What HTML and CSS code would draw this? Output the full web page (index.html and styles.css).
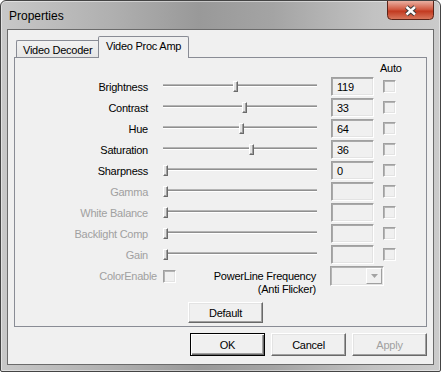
FILE: index.html
```html
<!DOCTYPE html>
<html lang="en">
<head>
    <meta charset="UTF-8">
    <title>Properties</title>
    <link rel="stylesheet" href="styles.css">
</head>
<body>
    <div class="window">
        <div class="titlebar">
            <span class="title">Properties</span>
            <div class="close">
                <svg width="47" height="19" viewBox="0 0 47 19">
                    <defs>
                        <linearGradient id="cg" x1="0" y1="0" x2="0" y2="1">
                            <stop offset="0" stop-color="#eab0a2"/>
                            <stop offset="0.45" stop-color="#d25a42"/>
                            <stop offset="0.55" stop-color="#c23a20"/>
                            <stop offset="1" stop-color="#d97a5f"/>
                        </linearGradient>
                    </defs>
                    <path d="M0.5 0 V14.5 Q0.5 18.5 4.5 18.5 H42.5 Q46.5 18.5 46.5 14.5 V0" fill="url(#cg)" stroke="#5a2419"/>
                    <path d="M19.5 6 L28 13.5 M28 6 L19.5 13.5" stroke="#3b3b3b" stroke-width="4.4"/>
                    <path d="M19.5 6 L28 13.5 M28 6 L19.5 13.5" stroke="#fff" stroke-width="2.4"/>
                </svg>
            </div>
        </div>
        <div class="client">
            <div class="tabs">
                <div class="tab">Video Decoder</div>
                <div class="tab active">Video Proc Amp</div>
            </div>
            <div class="panel">
                <div class="auto-head">Auto</div>

                <div class="row">
                    <span class="lbl">Brightness</span>
                    <div class="slider"><div class="track"></div><div class="thumb" style="left:70px"></div></div>
                    <div class="edit">119</div>
                    <div class="check"></div>
                </div>
                <div class="row">
                    <span class="lbl">Contrast</span>
                    <div class="slider"><div class="track"></div><div class="thumb" style="left:79px"></div></div>
                    <div class="edit">33</div>
                    <div class="check"></div>
                </div>
                <div class="row">
                    <span class="lbl">Hue</span>
                    <div class="slider"><div class="track"></div><div class="thumb" style="left:76px"></div></div>
                    <div class="edit">64</div>
                    <div class="check"></div>
                </div>
                <div class="row">
                    <span class="lbl">Saturation</span>
                    <div class="slider"><div class="track"></div><div class="thumb" style="left:86px"></div></div>
                    <div class="edit">36</div>
                    <div class="check"></div>
                </div>
                <div class="row">
                    <span class="lbl">Sharpness</span>
                    <div class="slider"><div class="track"></div><div class="thumb" style="left:0px"></div></div>
                    <div class="edit">0</div>
                    <div class="check"></div>
                </div>
                <div class="row disabled">
                    <span class="lbl">Gamma</span>
                    <div class="slider"><div class="track"></div><div class="thumb" style="left:0px"></div></div>
                    <div class="edit"></div>
                    <div class="check"></div>
                </div>
                <div class="row disabled">
                    <span class="lbl">White Balance</span>
                    <div class="slider"><div class="track"></div><div class="thumb" style="left:0px"></div></div>
                    <div class="edit"></div>
                    <div class="check"></div>
                </div>
                <div class="row disabled">
                    <span class="lbl">Backlight Comp</span>
                    <div class="slider"><div class="track"></div><div class="thumb" style="left:0px"></div></div>
                    <div class="edit"></div>
                    <div class="check"></div>
                </div>
                <div class="row disabled">
                    <span class="lbl">Gain</span>
                    <div class="slider"><div class="track"></div><div class="thumb" style="left:0px"></div></div>
                    <div class="edit"></div>
                    <div class="check"></div>
                </div>

                <div class="misc-row">
                    <span class="ce-lbl">ColorEnable</span>
                    <div class="check ce-check"></div>
                    <div class="plf">PowerLine Frequency<br>(Anti Flicker)</div>
                    <div class="combo">
                        <div class="combo-btn">
                            <svg width="7" height="4" viewBox="0 0 7 4"><path d="M0 0 H7 L3.5 4 Z" fill="#a3a3a3"/></svg>
                        </div>
                    </div>
                </div>

                <div class="default-row">
                    <button class="btn small">Default</button>
                </div>
            </div>
            <div class="buttons">
                <button class="btn primary">OK</button>
                <button class="btn">Cancel</button>
                <button class="btn off">Apply</button>
            </div>
        </div>
    </div>
</body>
</html>
```

FILE: styles.css
```css
body {
    margin: 0;
    padding: 0;
    font-family: "Liberation Sans", Arial, sans-serif;
    font-size: 11px;
    letter-spacing: -0.25px;
    color: #000;
    background: #fff;
}
.window {
    width: 441px;
    height: 372px;
    box-sizing: border-box;
    border: 1px solid #444;
    border-radius: 6px 6px 2px 2px;
    padding: 0 6px 6px 6px;
    display: flex;
    flex-direction: column;
    background: linear-gradient(to right, #c8c8c8 0%, #b0b0b0 25%, #999 45%, #a4a4a4 62%, #c2c2c2 85%, #cbcbcb 100%);
    box-shadow: inset 0 0 0 1px rgba(255, 255, 255, 0.45);
}
.titlebar {
    height: 28px;
    display: flex;
    align-items: flex-start;
    justify-content: space-between;
}
.title {
    font-size: 12px;
    letter-spacing: 0;
    line-height: 16px;
    margin: 7px 0 0 2px;
}
.close {
    height: 19px;
}
.close svg {
    display: block;
}
.client {
    flex: 1;
    background-color: #f0f0f0;
    border: 1px solid #6b6b6b;
    padding-top: 6px;
    display: flex;
    flex-direction: column;
}
.tabs {
    height: 22px;
    display: flex;
    align-items: flex-end;
    padding-left: 8px;
    position: relative;
    z-index: 1;
}
.tab {
    width: 82px;
    height: 17px;
    box-sizing: border-box;
    margin-bottom: 1px;
    padding: 3px 0 0 6px;
    border: 1px solid #898c95;
    border-bottom: none;
    border-right: none;
    border-radius: 2px 0 0 0;
    background: linear-gradient(#f2f2f2, #e6e6e6);
    white-space: nowrap;
}
.tab.active {
    width: 91px;
    height: 22px;
    margin-bottom: 0;
    padding: 3px 0 0 7px;
    border-right: 1px solid #898c95;
    border-radius: 2px 2px 0 0;
    background: #f0f0f0;
}
.panel {
    margin: -1px 6px 0 6px;
    border: 1px solid #898c95;
    background-color: #f0f0f0;
    padding: 4px 0 3px 0;
}
.auto-head {
    height: 13px;
    line-height: 13px;
    padding-left: 365px;
    margin-bottom: 2px;
}
.row {
    height: 19px;
    margin-bottom: 2px;
    display: flex;
    align-items: center;
}
.lbl {
    width: 133px;
    text-align: right;
    margin-right: 15px;
    white-space: nowrap;
}
.disabled .lbl {
    color: #a0a0a0;
}
.slider {
    width: 154px;
    height: 19px;
    margin-right: 14px;
    position: relative;
    display: flex;
    align-items: center;
}
.track {
    width: 100%;
    height: 1px;
    margin-top: -2px;
    background-color: #8f8f8f;
    border-top: 1px solid #b4b4b4;
    border-bottom: 1px solid #fff;
}
.thumb {
    position: absolute;
    top: 4px;
    width: 3px;
    height: 9px;
    background-color: #e4e4e4;
    border-top: 1px solid #fff;
    border-left: 1px solid #fff;
    border-right: 1px solid #6a6a6a;
    border-bottom: 1px solid #6a6a6a;
    box-shadow: inset -1px -1px #a0a0a0;
}
.edit {
    width: 43px;
    height: 19px;
    box-sizing: border-box;
    margin-right: 9px;
    padding: 2px 0 0 5px;
    line-height: 14px;
    background-color: #f0f0f0;
    border: 1px solid;
    border-color: #a0a0a0 #fff #fff #a0a0a0;
    box-shadow: inset 1px 1px #a8a8a8, inset -1px -1px #e3e3e3;
}
.check {
    width: 13px;
    height: 13px;
    box-sizing: border-box;
    background-color: #f0f0f0;
    border: 1px solid;
    border-color: #a0a0a0 #fff #fff #a0a0a0;
    box-shadow: inset 1px 1px #b4b4b4, inset -1px -1px #e3e3e3;
}
.misc-row {
    height: 36px;
    margin-top: 1px;
    display: flex;
    align-items: flex-start;
}
.ce-lbl {
    width: 142px;
    text-align: right;
    color: #a0a0a0;
    line-height: 13px;
    margin-top: 4px;
}
.ce-check {
    margin: 4px 0 0 6px;
}
.plf {
    flex: 1;
    text-align: right;
    line-height: 13px;
    margin: 4px 14px 0 0;
}
.combo {
    width: 54px;
    height: 20px;
    box-sizing: border-box;
    margin-right: 42px;
    border: 1px solid;
    border-color: #a0a0a0 #fff #fff #a0a0a0;
    box-shadow: inset 1px 1px #b4b4b4, inset -1px -1px #e3e3e3;
    display: flex;
    justify-content: flex-end;
    padding: 1px;
}
.combo-btn {
    width: 16px;
    height: 16px;
    box-sizing: border-box;
    border: 1px solid;
    border-color: #fff #a0a0a0 #a0a0a0 #fff;
    background-color: #f0f0f0;
    display: flex;
    align-items: center;
    justify-content: center;
}
.combo-btn svg {
    display: block;
}
.default-row {
    padding-left: 173px;
}
.btn {
    width: 75px;
    height: 23px;
    box-sizing: border-box;
    padding: 0;
    font-family: "Liberation Sans", Arial, sans-serif;
    font-size: 11px;
    letter-spacing: -0.25px;
    color: #000;
    background-color: #f0f0f0;
    border: 1px solid;
    border-color: #fff #696969 #696969 #fff;
    box-shadow: inset -1px -1px #a0a0a0, inset 1px 1px #e3e3e3;
}
.btn.small {
    height: 21px;
}
.btn.primary {
    border-color: #000;
    box-shadow: inset 1px 1px #fff, inset -1px -1px #696969, inset -2px -2px #a0a0a0;
}
.btn.off {
    color: #a0a0a0;
}
.buttons {
    display: flex;
    justify-content: flex-end;
    gap: 6px;
    margin: 6px 6px 0 0;
}
```
